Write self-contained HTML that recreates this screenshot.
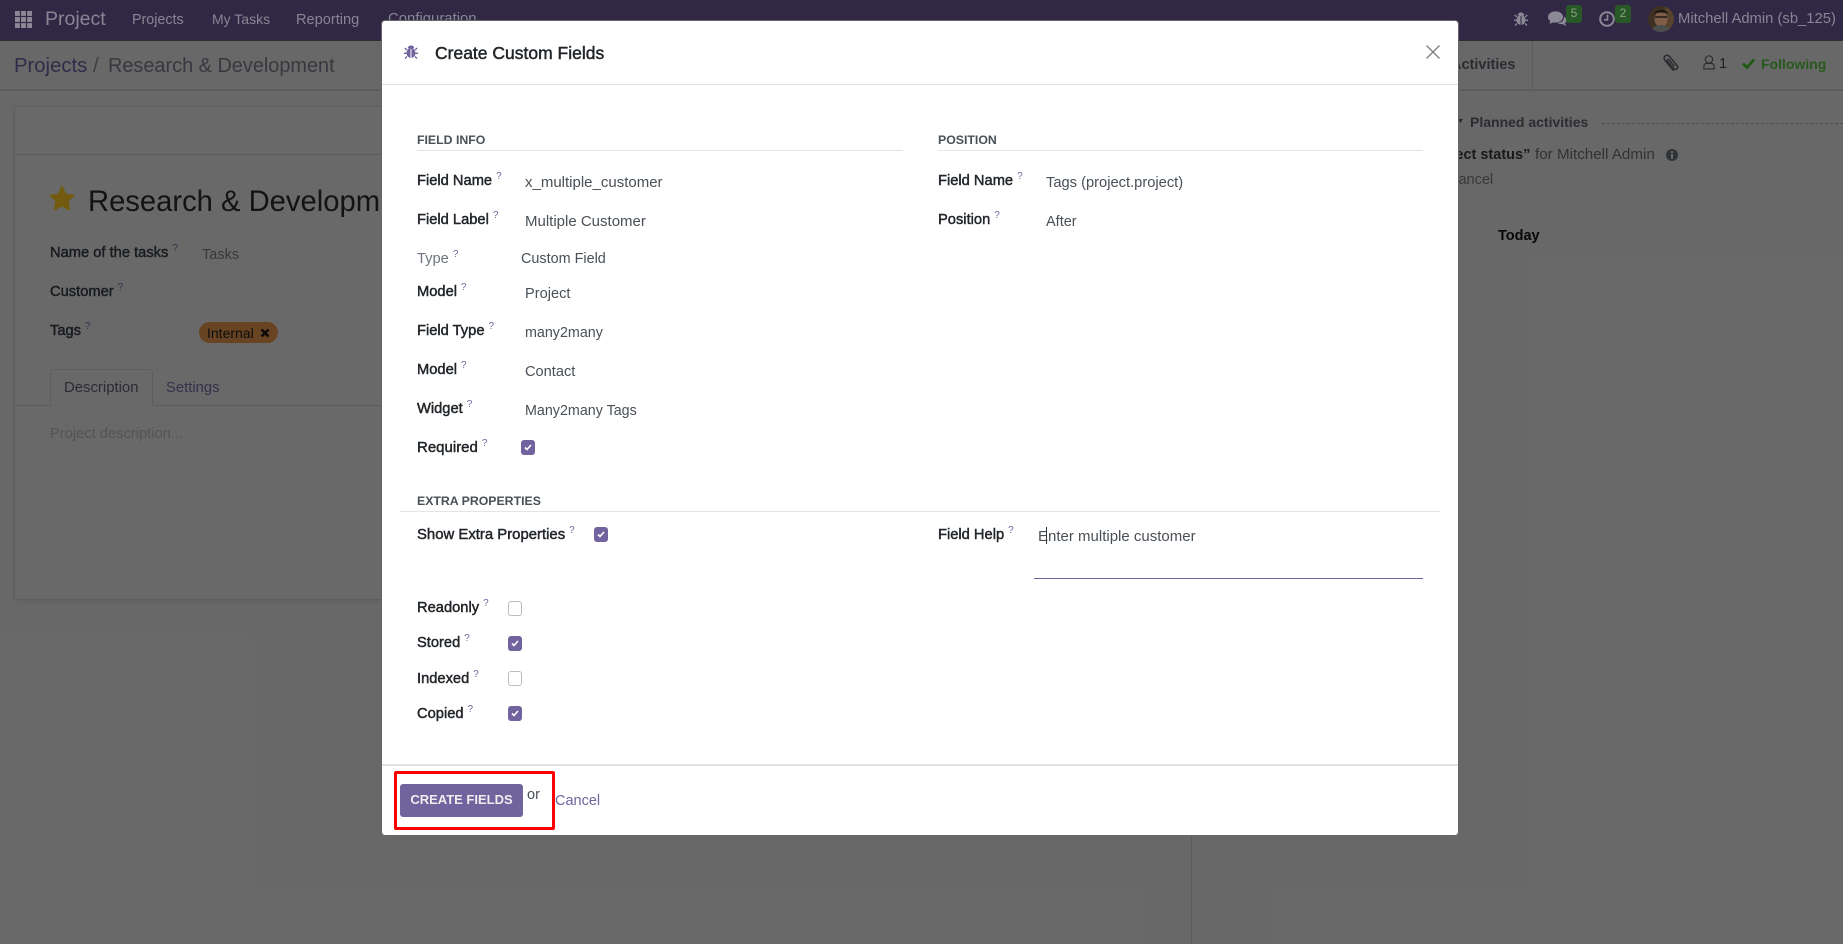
<!DOCTYPE html>
<html lang="en">
<head>
<meta charset="utf-8">
<title>Create Custom Fields</title>
<style>
html,body{margin:0;padding:0;width:1843px;height:944px;overflow:hidden;background:#7e7e7e;font-family:"Liberation Sans",sans-serif;font-size:15px;color:#3a3d40}
.t{position:absolute;white-space:nowrap;line-height:20px;height:20px}
.b{position:absolute}
svg{position:absolute;overflow:visible}
.nav{color:#a5a0b3;font-size:14.3px}
.bl{font-size:14.7px;-webkit-text-stroke:.45px #1f2226;color:#1f2226}
.mbl{font-size:14.7px;-webkit-text-stroke:.45px #212529;color:#212529}
.v{color:#495057;font-size:14.6px}
.h{font-weight:bold;font-size:12.3px;color:#495057}
.q{font-size:10px;font-weight:normal;-webkit-text-stroke:0;color:#71639e;position:relative;top:-6px;margin-left:4px;line-height:0}
.bq{color:#3d365c}
.cb{position:absolute;width:14px;height:15px;border-radius:3px;background:#71639e}
.cb svg{left:3px;top:4px}
.cbo{position:absolute;width:12px;height:13px;border-radius:3px;background:#fff;border:1px solid #bcbcbc}
.line{position:absolute;height:1px;background:#e4e4e4}
#backdrop{position:absolute;left:0;top:0;width:1843px;height:944px;background:rgba(0,0,0,.17)}
#modal{position:absolute;left:382px;top:21px;width:1076px;height:814px;background:#fff;border-radius:3px;box-shadow:0 0 0 1px #666}
</style>
</head>
<body>
<!-- top navbar -->
<div class="b" style="left:0;top:0;width:1843px;height:41px;background:#3a3152;border-bottom:1px solid #353535;box-sizing:border-box"></div>
<svg style="left:15px;top:11px" width="17" height="17" viewBox="0 0 16 16" fill="#a9a5b5"><rect x="0" y="0" width="4.600" height="4.600"/><rect x="5.700" y="0" width="4.600" height="4.600"/><rect x="11.400" y="0" width="4.600" height="4.600"/><rect x="0" y="5.700" width="4.600" height="4.600"/><rect x="5.700" y="5.700" width="4.600" height="4.600"/><rect x="11.400" y="5.700" width="4.600" height="4.600"/><rect x="0" y="11.400" width="4.600" height="4.600"/><rect x="5.700" y="11.400" width="4.600" height="4.600"/><rect x="11.400" y="11.400" width="4.600" height="4.600"/></svg>
<div class="t nav" style="left:45px;top:9px;font-size:19.500px">Project</div>
<div class="t nav" style="left:132px;top:10px">Projects</div>
<div class="t nav" style="left:212px;top:9px;font-size:14px">My Tasks</div>
<div class="t nav" style="left:296px;top:10px;font-size:14.600px">Reporting</div>
<div class="t nav" style="left:388px;top:9px;font-size:14.900px">Configuration</div>

<svg style="left:1514px;top:11px" width="14" height="15" viewBox="0 0 14 15" fill="#a9a5b5"><ellipse cx="7" cy="9" rx="4.500" ry="5"/><path d="M3.800 4.400a3.200 3 0 0 1 6.400 0z"/><path d="M3 6 .8 4M11 6l2.200-2M2.500 9.300H0M11.500 9.300H14M3 12.500l-2 2M11 12.500l2 2" stroke="#a9a5b5" stroke-width="1.300" fill="none"/><path d="M7 5v9" stroke="#3a3152" stroke-width="1"/></svg>
<svg style="left:1548px;top:11px" width="19" height="16" viewBox="0 0 19 16" fill="#a9a5b5"><ellipse cx="7.500" cy="6" rx="7.500" ry="5.600"/><path d="M2.500 9 1.500 13 6 11z"/><path d="M16 5.500c2 1.200 3 2.800 2.500 4.500-.3 1.100-1 1.700-1.500 2.200l1.200 3-3.800-2.200c-1.500.3-3.500 0-4.900-1 3.300-.1 7-2.200 6.500-6.500z"/></svg>
<div class="b" style="left:1566px;top:5px;width:16px;height:18px;background:#2f6a2d;border-radius:3px"></div>
<div class="t" style="left:1566px;top:3px;width:16px;text-align:center;font-size:12px;color:#a8c0a3">5</div>
<svg style="left:1599px;top:11px" width="16" height="16" viewBox="0 0 16 16" fill="none" stroke="#a9a5b5" stroke-width="2"><circle cx="8" cy="8" r="6.800"/><path d="M8.500 3.500V8.800H5" stroke-width="1.600"/></svg>
<div class="b" style="left:1615px;top:5px;width:16px;height:18px;background:#2f6a2d;border-radius:3px"></div>
<div class="t" style="left:1615px;top:3px;width:16px;text-align:center;font-size:12px;color:#a8c0a3">2</div>
<svg style="left:1648px;top:6px" width="26" height="26" viewBox="0 0 26 26"><defs><clipPath id="av"><circle cx="13" cy="13" r="13"/></clipPath></defs><g clip-path="url(#av)"><rect width="26" height="26" fill="#4b3a2a"/><rect x="17" width="9" height="26" fill="#6a5236"/><ellipse cx="13" cy="13" rx="6.500" ry="8" fill="#9a7358"/><path d="M6 8c1-5 13-6 14 0-3-2-11-2-14 0z" fill="#221c18"/><path d="M7 11h12" stroke="#26211d" stroke-width="1.500"/><path d="M3 26c1-5 6-7 10-7s9 2 10 7z" fill="#5b6160"/></g></svg>
<div class="t" style="left:1678px;top:9px;font-size:14.800px;color:#a5a0b3">Mitchell Admin (sb_125)</div>

<!-- control panel -->
<div class="b" style="left:0;top:89px;width:1843px;height:2px;background:#707070"></div>
<div class="t" style="left:14px;top:56px;font-size:20.300px;color:#3b3558">Projects</div>
<div class="t" style="left:93px;top:56px;font-size:20.300px;color:#4b4b52">/</div>
<div class="t" style="left:108px;top:56px;font-size:19.900px;color:#44444c">Research &amp; Development</div>

<!-- sheet -->
<div class="b" style="left:14px;top:106px;width:1177px;height:494px;box-sizing:border-box;border:1px solid #6f7070;background:#7f7f7f;box-shadow:0 2px 6px rgba(0,0,0,.08)"></div>
<div class="b" style="left:15px;top:154px;width:1176px;height:1px;background:#6f7070"></div>
<svg style="left:48px;top:184px" width="28" height="28" viewBox="0 0 28 28"><path d="M14 1l4 8.800 9.500 1.100-7 6.500 1.900 9.500L14 22.600l-8.400 4.300 1.900-9.500-7-6.500L10 9.800z" fill="#8a6e12"/></svg>
<div class="t" style="left:88px;top:192px;font-size:29.200px;color:#16181a">Research &amp; Development</div>
<div class="t bl" style="left:50px;top:243px">Name of the tasks<span class="q bq">?</span></div>
<div class="t" style="left:202px;top:245px;font-size:14.500px;color:#424549">Tasks</div>
<div class="t bl" style="left:50px;top:282px">Customer<span class="q bq">?</span></div>
<div class="t bl" style="left:50px;top:321px">Tags<span class="q bq">?</span></div>
<div class="b" style="left:199px;top:322px;width:79px;height:21px;border-radius:11px;background:#7f5229"></div>
<div class="t" style="left:207px;top:323px;font-size:14px;color:#0f0f0f">Internal</div>
<svg style="left:260px;top:328px" width="10" height="10" viewBox="0 0 10 10"><path d="M1.500 1.500l7 7M8.500 1.500l-7 7" stroke="#0f0f0f" stroke-width="2.600"/></svg>
<div class="b" style="left:15px;top:405px;width:1176px;height:1px;background:#6f7070"></div>
<div class="b" style="left:50px;top:369px;width:103px;height:37px;box-sizing:border-box;border:1px solid #6f7070;border-bottom:0;border-radius:3px 3px 0 0;background:#7f7f7f"></div>
<div class="t" style="left:64px;top:378px;font-size:14.900px;color:#33363d">Description</div>
<div class="t" style="left:166px;top:378px;font-size:14.800px;color:#3f3a5c">Settings</div>
<div class="t" style="left:50px;top:424px;font-size:14.700px;color:#656565">Project description...</div>

<!-- chatter -->
<div class="b" style="left:1191px;top:91px;width:1px;height:853px;background:#6f7070"></div>
<div class="b" style="left:1532px;top:41px;width:1px;height:48px;background:#6f7070"></div>
<div class="t" style="left:1451px;top:55px;font-size:14.500px;font-weight:bold;color:#33363d">Activities</div>
<svg style="left:1662px;top:54px" width="17" height="18" viewBox="0 0 17 18" fill="none" stroke="#33363a" stroke-width="1.500"><path d="M11.500 16.500 3 6.500C1.500 4.700 2 3 3.200 2 4.500 1 6.200 1 7.500 2.500l7.500 9c1 1.300.8 2.600-.2 3.400-1 .8-2.300.7-3.200-.3L5.500 7.500c-.5-.7-.4-1.300 0-1.700.5-.4 1.100-.4 1.700.2l5.300 6.500"/></svg>
<svg style="left:1703px;top:54px" width="12" height="17" viewBox="0 0 14 18" fill="none" stroke="#33363a" stroke-width="1.400"><circle cx="7" cy="5.500" r="4.300"/><path d="M1 16.500v-3c0-2 1.500-3.500 3.500-3.500h5c2 0 3.500 1.500 3.500 3.500v3z"/></svg>
<div class="t" style="left:1719px;top:54px;font-size:14.500px;color:#25272a">1</div>
<svg style="left:1742px;top:58px" width="13" height="11" viewBox="0 0 13 11" fill="none" stroke="#256b16" stroke-width="2.800"><path d="M1 5.500l4 4 7-8"/></svg>
<div class="t" style="left:1761px;top:54px;font-size:14px;font-weight:bold;color:#2f6a22">Following</div>
<svg style="left:1458px;top:119px" width="5" height="5" viewBox="0 0 5 5"><path d="M0 0h5L2.500 4z" fill="#33363d"/></svg>
<div class="t" style="left:1470px;top:112px;font-size:14px;font-weight:bold;color:#33363d">Planned activities</div>
<div class="b" style="left:1602px;top:123px;width:241px;height:0;border-top:1px dashed #5f5f5f"></div>
<div class="t" style="left:1428px;top:145px;font-size:14.500px;font-weight:bold;color:#1e2023">project status”</div>
<div class="t" style="left:1535px;top:145px;font-size:15.200px;color:#3a3d40">for Mitchell Admin</div>
<svg style="left:1666px;top:149px" width="12" height="12" viewBox="0 0 12 12"><circle cx="6" cy="6" r="6" fill="#3c3f42"/><rect x="5" y="2.200" width="2" height="1.800" fill="#7f7f7f"/><rect x="5" y="5" width="2" height="4.800" fill="#7f7f7f"/></svg>
<div class="t" style="left:1448px;top:170px;font-size:14.500px;color:#444">Cancel</div>
<div class="b" style="left:1550px;top:236px;width:293px;height:1px;background:#7a7a7a"></div>
<div class="t" style="left:1498px;top:226px;font-size:14.500px;font-weight:bold;color:#0a0a0a">Today</div>

<div id="backdrop"></div>

<!-- modal -->
<div id="modal"></div>
<div class="b" style="left:382px;top:84px;width:1076px;height:1px;background:#dee2e6"></div>
<svg style="left:404px;top:44px" width="14" height="15" viewBox="0 0 14 15" fill="#71639e"><ellipse cx="7" cy="9" rx="4.500" ry="5"/><path d="M3.800 4.400a3.200 3 0 0 1 6.400 0z"/><path d="M3 6 .8 4M11 6l2.200-2M2.500 9.300H0M11.500 9.300H14M3 12.500l-2 2M11 12.500l2 2" stroke="#71639e" stroke-width="1.300" fill="none"/><path d="M7 5v9" stroke="#fff" stroke-width="1"/></svg>
<div class="t" style="left:435px;top:43px;font-size:17.500px;-webkit-text-stroke:.45px #212529;color:#212529">Create Custom Fields</div>
<svg style="left:1426px;top:45px" width="14" height="14" viewBox="0 0 14 14"><path d="M.5.500l13 13M13.500.500l-13 13" stroke="#7f7f7f" stroke-width="1.300"/></svg>

<div class="t h" style="left:417px;top:130px">FIELD INFO</div>
<div class="line" style="left:417px;top:150px;width:486px"></div>
<div class="t h" style="left:938px;top:130px">POSITION</div>
<div class="line" style="left:938px;top:150px;width:485px"></div>

<div class="t mbl" style="left:417px;top:171px">Field Name<span class="q">?</span></div>
<div class="t v" style="left:525px;top:173px;font-size:15px">x_multiple_customer</div>
<div class="t mbl" style="left:417px;top:210px">Field Label<span class="q">?</span></div>
<div class="t v" style="left:525px;top:212px;font-size:15px">Multiple Customer</div>
<div class="t" style="left:417px;top:249px;font-size:14.700px;color:#6c757d">Type<span class="q">?</span></div>
<div class="t v" style="left:521px;top:249px;font-size:14.400px">Custom Field</div>
<div class="t mbl" style="left:417px;top:282px">Model<span class="q">?</span></div>
<div class="t v" style="left:525px;top:284px">Project</div>
<div class="t mbl" style="left:417px;top:321px">Field Type<span class="q">?</span></div>
<div class="t v" style="left:525px;top:323px;font-size:14.300px">many2many</div>
<div class="t mbl" style="left:417px;top:360px">Model<span class="q">?</span></div>
<div class="t v" style="left:525px;top:362px">Contact</div>
<div class="t mbl" style="left:417px;top:399px">Widget<span class="q">?</span></div>
<div class="t v" style="left:525px;top:401px;font-size:14.300px">Many2many Tags</div>
<div class="t mbl" style="left:417px;top:438px;font-size:15px">Required<span class="q">?</span></div>
<div class="cb" style="left:521px;top:440px"><svg width="8" height="7" viewBox="0 0 8 7" fill="none" stroke="#fff" stroke-width="1.600"><path d="M1 3.500l2 2 4-4.500"/></svg></div>

<div class="t mbl" style="left:938px;top:171px">Field Name<span class="q">?</span></div>
<div class="t v" style="left:1046px;top:173px;font-size:14.700px">Tags (project.project)</div>
<div class="t mbl" style="left:938px;top:210px">Position<span class="q">?</span></div>
<div class="t v" style="left:1046px;top:212px;font-size:14.500px">After</div>

<div class="t h" style="left:417px;top:491px">EXTRA PROPERTIES</div>
<div class="line" style="left:400px;top:511px;width:1040px"></div>
<div class="t mbl" style="left:417px;top:525px;font-size:14.900px">Show Extra Properties<span class="q">?</span></div>
<div class="cb" style="left:594px;top:527px"><svg width="8" height="7" viewBox="0 0 8 7" fill="none" stroke="#fff" stroke-width="1.600"><path d="M1 3.500l2 2 4-4.500"/></svg></div>
<div class="t mbl" style="left:938px;top:525px">Field Help<span class="q">?</span></div>
<div class="t v" style="left:1038px;top:527px;font-size:15px">Enter multiple customer</div>
<div class="b" style="left:1046px;top:527px;width:1px;height:17px;background:#333"></div>
<div class="b" style="left:1034px;top:578px;width:389px;height:1px;background:#71639e"></div>

<div class="t mbl" style="left:417px;top:598px">Readonly<span class="q">?</span></div>
<div class="cbo" style="left:508px;top:601px"></div>
<div class="t mbl" style="left:417px;top:633px">Stored<span class="q">?</span></div>
<div class="cb" style="left:508px;top:636px"><svg width="8" height="7" viewBox="0 0 8 7" fill="none" stroke="#fff" stroke-width="1.600"><path d="M1 3.500l2 2 4-4.500"/></svg></div>
<div class="t mbl" style="left:417px;top:669px">Indexed<span class="q">?</span></div>
<div class="cbo" style="left:508px;top:671px"></div>
<div class="t mbl" style="left:417px;top:704px">Copied<span class="q">?</span></div>
<div class="cb" style="left:508px;top:706px"><svg width="8" height="7" viewBox="0 0 8 7" fill="none" stroke="#fff" stroke-width="1.600"><path d="M1 3.500l2 2 4-4.500"/></svg></div>

<div class="b" style="left:382px;top:764px;width:1076px;height:2px;background:#dee2e6"></div>
<div class="b" style="left:400px;top:784px;width:123px;height:33px;background:#71639e;border-radius:3px"></div>
<div class="t" style="left:400px;top:790px;width:123px;text-align:center;font-size:13px;font-weight:bold;color:#eee">CREATE FIELDS</div>
<div class="t" style="left:527px;top:785px;font-size:14.500px;color:#495057">or</div>
<div class="t" style="left:555px;top:791px;font-size:14.500px;color:#71639e">Cancel</div>
<div class="b" style="left:394px;top:771px;width:161px;height:59px;box-sizing:border-box;border:3px solid #f00;border-radius:2px"></div>
</body>
</html>
